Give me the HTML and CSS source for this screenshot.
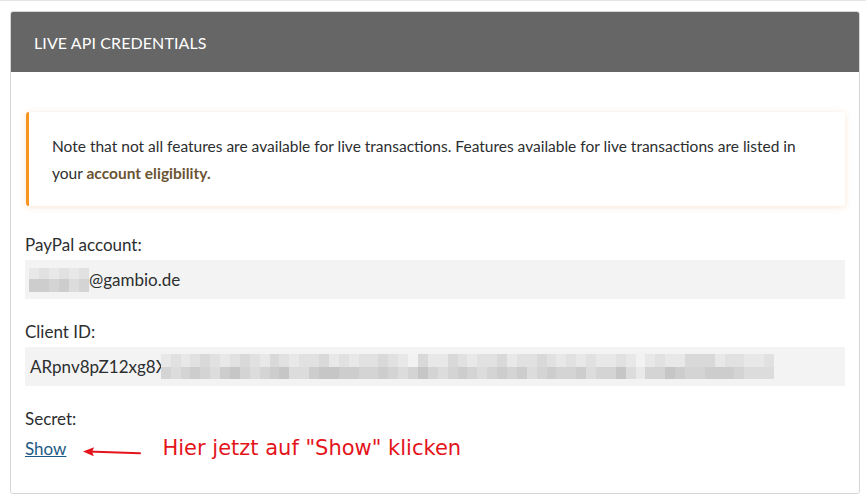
FILE: index.html
```html
<!DOCTYPE html>
<html lang="en">
<head>
<meta charset="utf-8">
<title>Live API Credentials</title>
<link rel="stylesheet" href="styles.css">
</head>
<body>
<div class="topline"></div>
<section class="panel">
  <header class="panel-head">LIVE API CREDENTIALS</header>
  <div class="panel-body">
    <div class="notice">
      Note that not all features are available for live transactions. Features available for live transactions are listed in your <a class="notice-link" href="#">account eligibility.</a>
    </div>

    <div class="label">PayPal account:</div>
    <div class="field">
      <span class="blur blur-mail">
        <i class="l1"></i><i class="l2"></i><i class="l1"></i><i class="l2"></i><i class="l1"></i><i class="l2"></i>
        <i class="d3"></i><i class="d3"></i><i class="d2"></i><i class="d3"></i><i class="d1"></i><i class="d2"></i>
      </span><span class="val">@gambio.de</span>
    </div>

    <div class="label">Client ID:</div>
    <div class="field">
      <span class="val val-id">ARpnv8pZ12xg8X</span><span class="blur blur-id">
        <i class="l1"></i><i class="l2"></i><i class="l1"></i><i class="l2"></i><i class="l3"></i><i class="l2"></i><i class="l1"></i><i class="l2"></i><i class="l3"></i><i class="l2"></i><i class="l1"></i><i class="l3"></i><i class="l2"></i><i class="l1"></i><i class="l2"></i><i class="l2"></i><i class="l3"></i><i class="l1"></i><i class="l2"></i><i class="l1"></i><i class="l2"></i><i class="l2"></i><i class="l3"></i><i class="l2"></i><i class="l1"></i><i class="l0"></i><i class="l3"></i><i class="l1"></i><i class="l1"></i><i class="l3"></i><i class="l2"></i><i class="l1"></i><i class="l2"></i><i class="l2"></i><i class="l3"></i><i class="l1"></i><i class="l2"></i><i class="l2"></i><i class="l3"></i><i class="l2"></i><i class="l1"></i><i class="l2"></i><i class="l1"></i><i class="l2"></i><i class="l1"></i><i class="l1"></i><i class="l2"></i><i class="l1"></i><i class="l0"></i><i class="l1"></i><i class="l2"></i><i class="l1"></i><i class="l1"></i><i class="l3"></i><i class="l3"></i><i class="l3"></i><i class="l1"></i><i class="l2"></i><i class="l2"></i><i class="l1"></i><i class="l1"></i><i class="l2"></i>
        <i class="d2"></i><i class="d1"></i><i class="d2"></i><i class="d3"></i><i class="d2"></i><i class="d1"></i><i class="d3"></i><i class="d4"></i><i class="d2"></i><i class="d1"></i><i class="d2"></i><i class="d3"></i><i class="d4"></i><i class="d1"></i><i class="d1"></i><i class="d3"></i><i class="d4"></i><i class="d4"></i><i class="d3"></i><i class="d3"></i><i class="d2"></i><i class="d2"></i><i class="d3"></i><i class="d2"></i><i class="d1"></i><i class="d2"></i><i class="d4"></i><i class="d2"></i><i class="d1"></i><i class="d2"></i><i class="d3"></i><i class="d2"></i><i class="d1"></i><i class="d2"></i><i class="d3"></i><i class="d2"></i><i class="d3"></i><i class="d1"></i><i class="d2"></i><i class="d3"></i><i class="d2"></i><i class="d2"></i><i class="d3"></i><i class="d1"></i><i class="d2"></i><i class="d2"></i><i class="d4"></i><i class="d1"></i><i class="d0"></i><i class="d2"></i><i class="d2"></i><i class="d4"></i><i class="d3"></i><i class="d2"></i><i class="d2"></i><i class="d3"></i><i class="d3"></i><i class="d3"></i><i class="d2"></i><i class="d1"></i><i class="d1"></i><i class="d1"></i>
      </span>
    </div>

    <div class="label">Secret:</div>
    <div class="show-row">
      <a class="show-link" href="#">Show</a>
      <svg class="arrow" width="60" height="12" viewBox="0 0 60 12" aria-hidden="true">
        <path d="M58 7.2 L6 5.6" stroke="#e4141b" stroke-width="2" fill="none" stroke-linecap="round"/>
        <path d="M1 5.4 L12 1.2 L10.2 5.7 L11.8 10.3 Z" fill="#e4141b"/>
      </svg>
      <span class="hint">Hier jetzt auf "Show" klicken</span>
    </div>
  </div>
</section>
</body>
</html>
```

FILE: styles.css
```css
* { box-sizing: border-box; }

html, body {
  margin: 0;
  padding: 0;
  background: #ffffff;
}

body {
  font-family: Lato, "Noto Sans", "Liberation Sans", sans-serif;
  color: #2c2e2f;
}

.topline {
  height: 1px;
  background: #e4e4e4;
}

.panel {
  margin: 10px 6px 0 10px;
  border: 1px solid #d6d6d6;
  border-radius: 3px;
  overflow: hidden;
}

.panel-head {
  height: 60px;
  background: #666666;
  color: #ffffff;
  font-size: 16px;
  line-height: 62px;
  padding-left: 23px;
  letter-spacing: 0.1px;
}

.panel-body {
  padding: 40px 14px 35px 14px;
}

.notice {
  margin-left: 1px;
  border-left: 3px solid #f7941d;
  border-radius: 3px;
  background: #ffffff;
  box-shadow: 0 1px 6px rgba(240, 160, 90, 0.28);
  padding: 21px 24px 19px 23px;
  font-size: 15.5px;
  line-height: 27px;
  color: #2c2e2f;
}

.notice-link {
  color: #6c5433;
  font-weight: bold;
  text-decoration: none;
}

.label {
  font-size: 17px;
  line-height: 20px;
  margin-top: 23px;
  color: #2c2e2f;
}

.notice + .label {
  margin-top: 29px;
}

.field {
  margin-top: 5px;
  height: 39px;
  background: #f3f3f3;
  display: flex;
  align-items: center;
  padding-left: 4px;
  font-size: 17px;
  color: #2c2e2f;
}

.val-id {
  padding-left: 1px;
}

.blur {
  display: grid;
  grid-auto-flow: row;
}

.blur-mail {
  grid-template-columns: repeat(6, 10px);
  grid-template-rows: 11px 13px;
  margin-top: 1px;
}

.blur-id {
  grid-template-columns: repeat(62, 9.9px);
  grid-template-rows: 13px 12px;
  margin-left: -6px;
}

.blur i {
  display: block;
}

.l0 { background: #f2f2f2; }
.l1 { background: #e8e8e8; }
.l2 { background: #e1e1e1; }
.l3 { background: #d9d9d9; }
.d0 { background: #e9e9e9; }
.d1 { background: #dcdcdc; }
.d2 { background: #d4d4d4; }
.d3 { background: #cdcdcd; }
.d4 { background: #c6c6c6; }

.show-row {
  margin-top: 9px;
  display: flex;
  align-items: center;
  height: 20px;
}

.show-link {
  font-size: 17px;
  color: #1c5a86;
  text-decoration: underline;
}

.arrow {
  margin-left: 16px;
  margin-top: 8px;
}

.hint {
  margin-left: 20px;
  font-family: "DejaVu Sans", sans-serif;
  font-size: 21px;
  color: #e4141b;
}
```
